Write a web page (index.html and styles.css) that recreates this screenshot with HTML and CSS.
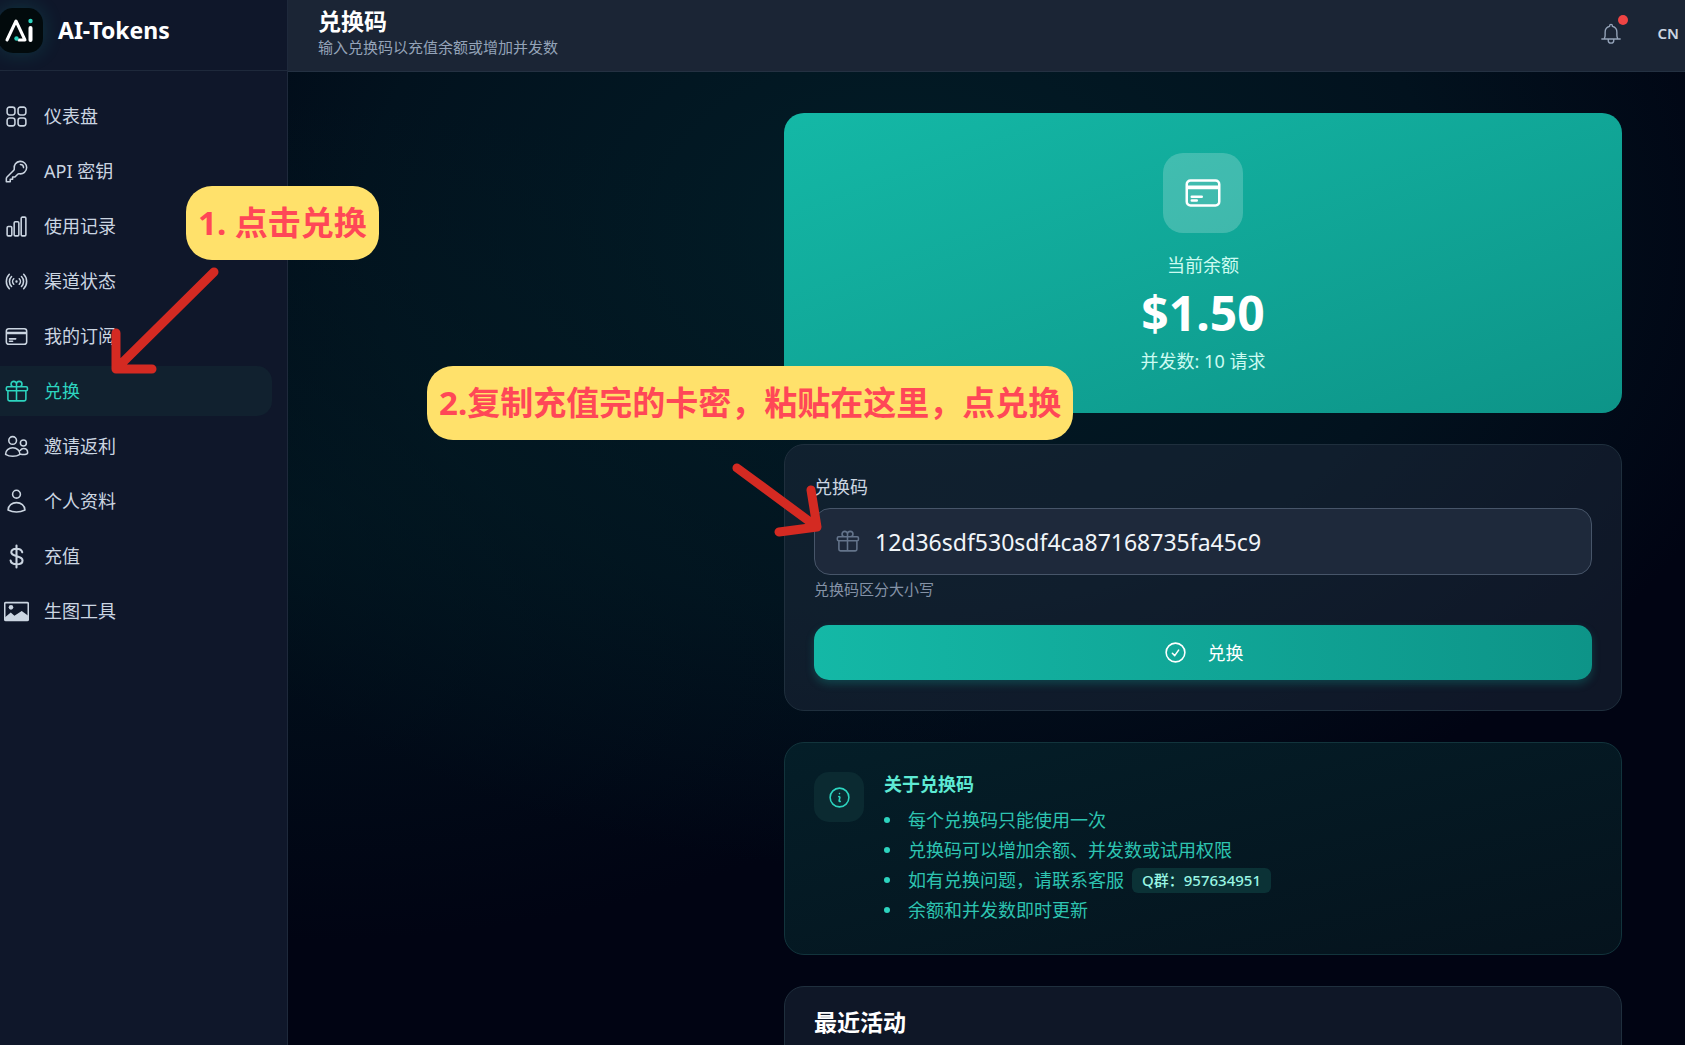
FILE: index.html
```html
<!DOCTYPE html>
<html lang="zh-CN">
<head>
    <meta charset="UTF-8">
    <meta name="viewport" content="width=device-width, initial-scale=1.0">
    <title>兑换码 - AI-Tokens</title>
    <link rel="stylesheet" href="styles.css">
</head>
<body>
    <svg class="sprite" aria-hidden="true">
        <symbol id="i-card" viewBox="0 0 24 24">
            <path d="M2.25 8.25h19.5M2.25 9h19.5m-16.5 5.25h6m-6 2.25h3m-3.75 3h15a2.25 2.25 0 002.25-2.25V6.75A2.25 2.25 0 0019.5 4.5h-15a2.25 2.25 0 00-2.25 2.25v10.5A2.25 2.25 0 004.5 19.5z"/>
        </symbol>
        <symbol id="i-gift" viewBox="0 0 24 24">
            <path d="M21 11.25v8.25a1.5 1.5 0 01-1.5 1.5H5.25a1.5 1.5 0 01-1.5-1.5v-8.25M12 4.875A2.625 2.625 0 109.375 7.5H12m0-2.625V7.5m0-2.625A2.625 2.625 0 1114.625 7.5H12m0 0V21m-8.625-9.75h18c.621 0 1.125-.504 1.125-1.125v-1.5c0-.621-.504-1.125-1.125-1.125h-18c-.621 0-1.125.504-1.125 1.125v1.5c0 .621.504 1.125 1.125 1.125z"/>
        </symbol>
    </svg>

    <div class="app">
        <aside class="sidebar">
            <div class="brand">
                <svg class="brand-logo" viewBox="0 0 45 45" aria-hidden="true">
                    <path d="M9 32L18 13l9 19h-6" fill="none" stroke="#fff" stroke-width="3" stroke-linecap="round" stroke-linejoin="round"/>
                    <path d="M32.5 20v12" stroke="#fff" stroke-width="4" stroke-linecap="round"/>
                    <circle cx="32.5" cy="13" r="2.2" fill="#2dd4bf"/>
                    <circle cx="18.5" cy="30.5" r="2.2" fill="#2dd4bf"/>
                </svg>
                <span class="brand-name">AI-Tokens</span>
            </div>
            <nav class="nav">
                <a class="nav-item" href="#">
                    <svg class="icon" viewBox="0 0 24 24"><path d="M3 5.25A2.25 2.25 0 015.25 3h3a2.25 2.25 0 012.25 2.25v3a2.25 2.25 0 01-2.25 2.25h-3A2.25 2.25 0 013 8.25v-3zM3 15.75a2.25 2.25 0 012.25-2.25h3a2.25 2.25 0 012.25 2.25v3A2.25 2.25 0 018.25 21h-3A2.25 2.25 0 013 18.750v-3zM13.5 5.25A2.25 2.25 0 0115.75 3h3A2.25 2.25 0 0121 5.25v3a2.25 2.25 0 01-2.25 2.25h-3a2.25 2.25 0 01-2.25-2.25v-3zM13.5 15.75a2.25 2.25 0 012.25-2.25h3A2.25 2.25 0 0121 15.75v3A2.25 2.25 0 0118.75 21h-3a2.25 2.25 0 01-2.25-2.25v-3z"/></svg>
                    <span>仪表盘</span>
                </a>
                <a class="nav-item" href="#">
                    <svg class="icon" viewBox="0 0 24 24"><path d="M15.75 5.25a3 3 0 013 3m3 0a6 6 0 01-7.029 5.912c-.563-.097-1.159.026-1.563.43L10.5 17.25H8.25v2.25H6v2.25H2.25v-2.818c0-.597.237-1.17.659-1.591l6.499-6.499c.404-.404.527-1 .43-1.563A6 6 0 1121.75 8.25z"/></svg>
                    <span>API 密钥</span>
                </a>
                <a class="nav-item" href="#">
                    <svg class="icon" viewBox="0 0 24 24"><path d="M3 13.125C3 12.504 3.504 12 4.125 12h2.25c.621 0 1.125.504 1.125 1.125v6.75C7.5 20.496 6.996 21 6.375 21h-2.25A1.125 1.125 0 013 19.875v-6.75zM9.75 8.625c0-.621.504-1.125 1.125-1.125h2.25c.621 0 1.125.504 1.125 1.125v11.25c0 .621-.504 1.125-1.125 1.125h-2.25a1.125 1.125 0 01-1.125-1.125V8.625zM16.5 4.125c0-.621.504-1.125 1.125-1.125h2.25C20.496 3 21 3.504 21 4.125v15.75c0 .621-.504 1.125-1.125 1.125h-2.25a1.125 1.125 0 01-1.125-1.125V4.125z"/></svg>
                    <span>使用记录</span>
                </a>
                <a class="nav-item" href="#">
                    <svg class="icon" viewBox="0 0 24 24"><path d="M9.348 14.651a3.75 3.75 0 010-5.303m5.304 0a3.75 3.75 0 010 5.303m-7.425 2.122a6.75 6.75 0 010-9.546m9.546 0a6.75 6.75 0 010 9.546M5.106 18.894c-3.808-3.808-3.808-9.98 0-13.789m13.788 0c3.808 3.808 3.808 9.981 0 13.79M12 12h.008v.007H12V12zm.375 0a.375.375 0 11-.75 0 .375.375 0 01.75 0z"/></svg>
                    <span>渠道状态</span>
                </a>
                <a class="nav-item" href="#">
                    <svg class="icon"><use href="#i-card"/></svg>
                    <span>我的订阅</span>
                </a>
                <a class="nav-item active" href="#" aria-current="page">
                    <svg class="icon"><use href="#i-gift"/></svg>
                    <span>兑换</span>
                </a>
                <a class="nav-item" href="#">
                    <svg class="icon" viewBox="0 0 24 24"><path d="M15.5 15.8c1-1.3 2-1.8 3.2-1.8 2.3 0 4 1.7 4 4 0 .6-.3.9-.9 1.1-1.4.5-3.6.7-5.6.3M12 6.2a3.7 3.7 0 11-7.4 0 3.7 3.7 0 017.4 0zM21.5 8.6a2.9 2.9 0 11-5.8 0 2.9 2.9 0 015.8 0zM1.5 19.5c0-3.7 3-6.3 6.9-6.3s6.9 2.6 6.9 6.3c-1.8 1.2-4.2 1.9-6.9 1.9s-5.1-.7-6.9-1.9z"/></svg>
                    <span>邀请返利</span>
                </a>
                <a class="nav-item" href="#">
                    <svg class="icon" viewBox="0 0 24 24"><path d="M15.75 5a3.75 3.75 0 11-7.5 0 3.75 3.75 0 017.5 0zM3.9 20.1c.2-4.2 3.7-7 8.1-7s7.9 2.8 8.1 7A18 18 0 0112 22c-2.9 0-5.7-.7-8.1-1.9z"/></svg>
                    <span>个人资料</span>
                </a>
                <a class="nav-item" href="#">
                    <svg class="icon icon-dollar" viewBox="0 0 24 24"><path d="M12 1.5v21M17.5 8C17 5.8 15 4.5 12 4.5 8.8 4.5 7 5.9 7 8c0 5 10.8 2.6 10.8 7.8 0 2.3-2.3 3.7-5.6 3.7-3.4 0-5.6-1.4-5.9-3.7"/></svg>
                    <span>充值</span>
                </a>
                <a class="nav-item" href="#">
                    <svg class="icon" viewBox="0 0 24 24"><rect x="0.7" y="3.5" width="22.6" height="17" rx="1"/><circle cx="6.7" cy="8" r="2.2" class="fill"/><path class="fill" d="M1 17.5l5.5-4.5 3.5 3 7-4.500 6.300 4.500v4.500H1z"/></svg>
                    <span>生图工具</span>
                </a>
            </nav>
        </aside>

        <div class="main">
            <header class="topbar">
                <div>
                    <h1 class="page-title">兑换码</h1>
                    <p class="page-subtitle">输入兑换码以充值余额或增加并发数</p>
                </div>
                <div class="topbar-actions">
                    <button class="bell" type="button" aria-label="通知">
                        <svg class="icon" viewBox="0 0 24 24"><path d="M2 18h20M5 18v-1.5c.5-.8.6-1.500.6-3V10.500A6.400 6.400 0 0110.500 4.200V3.500a1.500 1.500 0 013 0v.7a6.400 6.400 0 014.900 6.300v3c0 1.500.1 2.200.6 3V18M9 18v1.500a3 3 0 006 0V18"/></svg>
                        <span class="bell-dot"></span>
                    </button>
                    <button class="lang" type="button">CN</button>
                </div>
            </header>

            <main class="content">
                <section class="balance">
                    <div class="balance-icon">
                        <svg class="icon"><use href="#i-card"/></svg>
                    </div>
                    <p class="balance-label">当前余额</p>
                    <p class="balance-value">$1.50</p>
                    <p class="balance-label">并发数: 10 请求</p>
                </section>

                <form class="card redeem">
                    <label class="redeem-label" for="code">兑换码</label>
                    <div class="field">
                        <svg class="icon"><use href="#i-gift"/></svg>
                        <input type="text" id="code" value="12d36sdf530sdf4ca87168735fa45c9">
                    </div>
                    <p class="hint">兑换码区分大小写</p>
                    <button class="submit" type="button">
                        <svg class="icon" viewBox="0 0 24 24"><path d="M9 12.75L11.25 15 15 9.75M21 12a9 9 0 11-18 0 9 9 0 0118 0z"/></svg>
                        <span>兑换</span>
                    </button>
                </form>

                <section class="card about">
                    <div class="about-icon">
                        <svg class="icon" viewBox="0 0 24 24"><path d="M11.25 11.25l.041-.02a.75.75 0 011.063.852l-.708 2.836a.75.75 0 001.063.853l.041-.021M21 12a9 9 0 11-18 0 9 9 0 0118 0zm-9-3.75h.008v.008H12V8.25z"/></svg>
                    </div>
                    <div>
                        <h2 class="about-title">关于兑换码</h2>
                        <ul class="about-list">
                            <li>每个兑换码只能使用一次</li>
                            <li>兑换码可以增加余额、并发数或试用权限</li>
                            <li>如有兑换问题，请联系客服<span class="badge">Q群：957634951</span></li>
                            <li>余额和并发数即时更新</li>
                        </ul>
                    </div>
                </section>

                <section class="card recent">
                    <h2 class="recent-title">最近活动</h2>
                </section>
            </main>
        </div>
    </div>

    <!-- 操作步骤标注 -->
    <div class="tip tip-one">1. 点击兑换</div>
    <div class="tip tip-two">2.复制充值完的卡密，粘贴在这里，点兑换</div>
    <svg class="arrow arrow-one" width="112" height="110" viewBox="0 0 112 110" aria-hidden="true">
        <path d="M104 7L8 102M6 68v36h36"/>
    </svg>
    <svg class="arrow arrow-two" width="92" height="76" viewBox="0 0 92 76" aria-hidden="true">
        <path d="M7 7l80 59M81 29l6 37-38 5"/>
    </svg>
</body>
</html>
```
FILE: styles.css
```css
* {
    box-sizing: border-box;
}
body {
    margin: 0;
    font-family: "Noto Sans", "Noto Sans CJK SC", sans-serif;
    font-size: 18px;
    line-height: 24px;
    color: #cbd5e1;
    background: #020617;
}
h1, h2, p, ul {
    margin: 0;
}
button, input {
    font-family: inherit;
}
.sprite {
    position: absolute;
    width: 0;
    height: 0;
}
.icon {
    width: 25px;
    height: 25px;
    flex-shrink: 0;
    fill: none;
    stroke: currentColor;
    stroke-width: 1.5;
    stroke-linecap: round;
    stroke-linejoin: round;
}
.icon .fill {
    fill: currentColor;
    stroke: none;
}
.icon-dollar {
    stroke-width: 2;
}
.app {
    display: flex;
    height: 100vh;
    overflow: hidden;
}

/* sidebar */
.sidebar {
    width: 288px;
    flex-shrink: 0;
    background: #0f172a;
    border-right: 1px solid #1e293b;
}
.brand {
    display: flex;
    align-items: center;
    gap: 15px;
    height: 71px;
    padding-bottom: 10px;
    border-bottom: 1px solid #1e293b;
}
.brand-logo {
    width: 45px;
    height: 45px;
    margin-left: -2px;
    border-radius: 15px;
    background: #020a0c;
    box-shadow: 0 0 20px rgba(20, 184, 166, 0.2);
}
.brand-name {
    font-size: 23px;
    font-weight: 700;
    color: #fff;
}
.nav {
    display: flex;
    flex-direction: column;
    gap: 5px;
    padding: 20px 15px 20px 0;
}
.nav-item {
    display: flex;
    align-items: center;
    gap: 15px;
    height: 50px;
    padding-left: 4px;
    border-radius: 0 15px 15px 0;
    color: #cbd5e1;
    text-decoration: none;
}
.nav-item.active {
    color: #2dd4bf;
    background: #11212f;
}

/* top bar */
.main {
    display: flex;
    flex: 1;
    flex-direction: column;
    min-width: 0;
    background:
        radial-gradient(ellipse 800px 420px at 0 50%, rgba(2, 28, 36, 0.6) 0, transparent 100%),
        radial-gradient(ellipse 900px 640px at 44% 22%, #021d27 0, #02121e 60%, #010413 100%);
}
.topbar {
    display: flex;
    align-items: center;
    justify-content: space-between;
    height: 72px;
    flex-shrink: 0;
    padding: 0 6px 5px 30px;
    background: #1b2535;
    border-bottom: 1px solid #243142;
}
.page-title {
    font-size: 23px;
    line-height: 28px;
    color: #fff;
}
.page-subtitle {
    font-size: 15px;
    line-height: 24px;
    color: #94a3b8;
}
.topbar-actions {
    display: flex;
    align-items: center;
    gap: 36px;
}
.topbar-actions button {
    padding: 0;
    border: 0;
    background: none;
    cursor: pointer;
}
.bell {
    position: relative;
    height: 25px;
    color: #94a3b8;
}
.bell .icon {
    width: 22px;
    height: 25px;
}
.bell-dot {
    position: absolute;
    top: -6px;
    right: -6px;
    width: 10px;
    height: 10px;
    border-radius: 50%;
    background: #ef4444;
}
.lang {
    font-size: 15px;
    font-weight: 600;
    color: #cbd5e1;
}

/* content */
.content {
    display: flex;
    flex-direction: column;
    gap: 31px;
    width: 100%;
    max-width: 964px;
    margin-left: auto;
    padding: 41px 63px 0;
}
.balance {
    display: flex;
    flex-direction: column;
    align-items: center;
    flex-shrink: 0;
    padding: 40px;
    border-radius: 20px;
    background: linear-gradient(to bottom right, #14b8a6, #0d9488);
}
.balance-icon {
    display: flex;
    align-items: center;
    justify-content: center;
    width: 80px;
    height: 80px;
    margin-bottom: 20px;
    border-radius: 20px;
    background: rgba(255, 255, 255, 0.2);
    color: #fff;
}
.balance-icon .icon {
    width: 40px;
    height: 40px;
}
.balance-label {
    color: #ccfbf1;
}
.balance-value {
    margin: 5px 0;
    font-size: 48px;
    font-weight: 700;
    line-height: 62px;
    color: #fff;
}
.card {
    flex-shrink: 0;
    padding: 30px;
    border: 1px solid #1f2f3d;
    border-radius: 20px;
    background: rgba(30, 41, 59, 0.5);
}
.redeem {
    padding: 30px 29px;
}
.redeem-label {
    display: block;
    margin-bottom: 9px;
}
.field {
    display: flex;
    align-items: center;
    gap: 15px;
    height: 67px;
    padding: 0 20px;
    border: 1px solid #475569;
    border-radius: 16px;
    background: #1e293b;
    color: #64748b;
}
.field input {
    flex: 1;
    min-width: 0;
    padding: 0;
    border: 0;
    outline: 0;
    background: none;
    font-size: 23px;
    color: #f1f5f9;
}
.hint {
    margin: 2px 0 24px;
    font-size: 15px;
    line-height: 24px;
    color: #8492a6;
}
.submit {
    display: flex;
    align-items: center;
    justify-content: center;
    gap: 20px;
    width: 100%;
    height: 55px;
    padding-bottom: 2px;
    border: 0;
    border-radius: 15px;
    background: linear-gradient(90deg, #14b8a6, #0d9488);
    box-shadow: 0 4px 8px rgba(20, 184, 166, 0.25);
    font-size: 18px;
    color: #fff;
    cursor: pointer;
}
.about {
    display: flex;
    gap: 20px;
    padding: 29px;
    border-color: #12343c;
    background: linear-gradient(to bottom right, #041e28, #05131d);
}
.about-icon {
    display: flex;
    align-items: center;
    justify-content: center;
    width: 50px;
    height: 50px;
    flex-shrink: 0;
    border-radius: 15px;
    background: #0b2a31;
    color: #2dd4bf;
}
.about-title {
    margin-bottom: 8px;
    font-size: 18px;
    line-height: 25px;
    color: #5eead4;
}
.about-list {
    padding: 0;
    line-height: 30px;
    list-style: none;
    color: #2dc4b1;
}
.about-list li {
    display: flex;
    align-items: center;
    height: 30px;
}
.about-list li::before {
    content: "";
    width: 6px;
    height: 6px;
    margin-right: 18px;
    border-radius: 50%;
    background: #2dd4bf;
}
.badge {
    margin-left: 8px;
    padding: 0 10px;
    border-radius: 6px;
    background: #0b3236;
    font-size: 15px;
    font-weight: 500;
    line-height: 25px;
    color: #99f6e4;
}
.recent {
    height: 120px;
    padding: 20px 29px;
}
.recent-title {
    font-size: 23px;
    line-height: 30px;
    color: #fff;
}

/* step tips */
.tip {
    position: absolute;
    height: 74px;
    padding: 0 12px;
    border-radius: 26px;
    background: #ffe16b;
    font-size: 33px;
    font-weight: 700;
    line-height: 74px;
    white-space: nowrap;
    color: #ff4757;
}
.tip-one {
    top: 186px;
    left: 186px;
}
.tip-two {
    top: 366px;
    left: 427px;
}
.arrow {
    position: absolute;
    fill: none;
    stroke: #d42a22;
    stroke-width: 9;
    stroke-linecap: round;
    stroke-linejoin: round;
}
.arrow-one {
    top: 265px;
    left: 110px;
}
.arrow-two {
    top: 461px;
    left: 730px;
}
```
